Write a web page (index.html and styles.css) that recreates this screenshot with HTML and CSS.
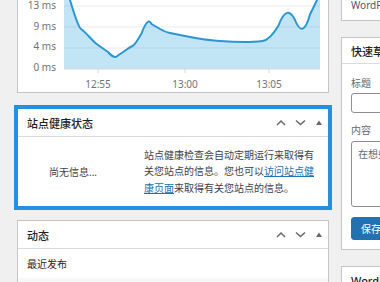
FILE: index.html
```html
<!DOCTYPE html>
<html lang="zh-CN">
<head>
<meta charset="utf-8">
<title>仪表盘</title>
<link rel="stylesheet" href="styles.css">
</head>
<body>
<div class="dash">
  <div class="col col-left">
    <div class="card chart-card">
      <svg class="chart" width="310" height="92" viewBox="18 0 310 92" xmlns="http://www.w3.org/2000/svg">
        <path class="area" d="M64,0 L70,0 Q78,27 81,29 Q84,31 89.5,37 Q95,43 98,45 Q101,47 108,52 Q115,60 118.5,55 Q122,53 126,50 Q130,47 132.5,46 Q135,45 141.5,33.5 Q148,16 151.5,24 Q155,26 160,29 Q165,32 170,33 Q175,34 182.5,35.5 Q190,37 198.5,38.5 Q207,40 220,41 Q233,42 244,42 Q255,42 262.5,41 Q270,40 278.5,25.5 Q287,3 295,20 Q303,40 310,14.5 L317,0 L320,0 L320,69 L64,69 Z"/>
        <line class="grid" x1="64" y1="6" x2="320" y2="6"/>
        <line class="grid" x1="64" y1="27" x2="320" y2="27"/>
        <line class="grid" x1="64" y1="48" x2="320" y2="48"/>
        <line class="axis" x1="64" y1="69" x2="320" y2="69"/>
        <line class="axis" x1="98" y1="69" x2="98" y2="73"/>
        <line class="axis" x1="185" y1="69" x2="185" y2="73"/>
        <line class="axis" x1="269" y1="69" x2="269" y2="73"/>
        <path class="line" d="M70,0 Q78,27 81,29 Q84,31 89.5,37 Q95,43 98,45 Q101,47 108,52 Q115,60 118.5,55 Q122,53 126,50 Q130,47 132.5,46 Q135,45 141.5,33.5 Q148,16 151.5,24 Q155,26 160,29 Q165,32 170,33 Q175,34 182.5,35.5 Q190,37 198.5,38.5 Q207,40 220,41 Q233,42 244,42 Q255,42 262.5,41 Q270,40 278.5,25.5 Q287,3 295,20 Q303,40 310,14.5 L317,0"/>
        <text class="lbl" x="56" y="9" text-anchor="end">13 ms</text>
        <text class="lbl" x="56" y="30" text-anchor="end">9 ms</text>
        <text class="lbl" x="56" y="50" text-anchor="end">4 ms</text>
        <text class="lbl" x="56" y="71" text-anchor="end">0 ms</text>
        <text class="lbl" x="98" y="88" text-anchor="middle">12:55</text>
        <text class="lbl" x="185" y="88" text-anchor="middle">13:00</text>
        <text class="lbl" x="269" y="88" text-anchor="middle">13:05</text>
      </svg>
    </div>

    <div class="card health">
      <div class="card-head">
        <h2>站点健康状态</h2>
        <div class="handles">
          <span class="h-btn h-up"><svg width="10" height="7" viewBox="0 0 10 7"><polyline points="1,6 5,2 9,6"/></svg></span>
          <span class="h-btn h-down"><svg width="11" height="7" viewBox="0 0 11 7"><polyline points="1,1.5 5.5,5.5 10,1.5"/></svg></span>
          <span class="h-btn h-tog"><svg width="6" height="5" viewBox="0 0 6 5"><polygon points="0,5 3,0.5 6,5"/></svg></span>
        </div>
      </div>
      <div class="health-body">
        <div class="health-status">尚无信息...</div>
        <div class="health-details">站点健康检查会自动定期运行来取得有关您站点的信息。您也可以<a href="#">访问站点健康页面</a>来取得有关您站点的信息。</div>
      </div>
    </div>

    <div class="card activity">
      <div class="card-head">
        <h2>动态</h2>
        <div class="handles">
          <span class="h-btn h-up"><svg width="10" height="7" viewBox="0 0 10 7"><polyline points="1,6 5,2 9,6"/></svg></span>
          <span class="h-btn h-down"><svg width="11" height="7" viewBox="0 0 11 7"><polyline points="1,1.5 5.5,5.5 10,1.5"/></svg></span>
          <span class="h-btn h-tog"><svg width="6" height="5" viewBox="0 0 6 5"><polygon points="0,5 3,0.5 6,5"/></svg></span>
        </div>
      </div>
      <div class="act-title">最近发布</div>
      <ul class="act-list">
        <li><span class="act-date">今天 下午1:07</span><a href="#">世界，您好！欢迎使用WordPress</a></li>
      </ul>
    </div>
  </div>

  <div class="col col-right">
    <div class="card news-top"><p>WordPress 5.4.2 安全和维护更新</p></div>

    <div class="card draft">
      <div class="card-head"><h2>快速草稿</h2></div>
      <form class="draft-body">
        <label class="fld-label" for="t">标题</label>
        <input class="fld-input" id="t" type="text">
        <label class="fld-label gap" for="c">内容</label>
        <textarea class="fld-area" id="c" placeholder="在想些什么？"></textarea>
        <button class="btn" type="button">保存草稿</button>
      </form>
    </div>

    <div class="card news">
      <div class="card-head"><h2>WordPress活动及新闻</h2></div>
    </div>
  </div>
</div>
</body>
</html>
```

FILE: styles.css
```css
* { box-sizing: border-box; }
html, body { margin: 0; padding: 0; }
body {
  width: 380px;
  height: 282px;
  overflow: hidden;
  background: #f0f0f1;
  font-family: "Noto Sans", "Noto Sans CJK SC", sans-serif;
  font-size: 10px;
  color: #3c434a;
}
.dash {
  display: flex;
  align-items: flex-start;
  gap: 12px;
  padding-left: 17px;
}
.col-left { width: 312px; flex: none; }
.col-right { width: 220px; flex: none; }

.card {
  background: #fff;
  border: 1px solid #c3c4c7;
}

/* chart */
.chart-card { height: 93px; border-top: none; }
.chart { display: block; }
.chart .area { fill: #c2e5f6; }
.chart .grid { stroke: rgba(0, 0, 0, 0.08); stroke-width: 1; }
.chart .axis { stroke: #d6d6d6; stroke-width: 1; }
.chart .line { fill: none; stroke: #2a96d2; stroke-width: 2; stroke-linejoin: round; stroke-linecap: round; }
.chart .lbl { font-family: "Noto Sans", sans-serif; font-size: 10px; fill: #6f7479; }

/* card header */
.card-head {
  display: flex;
  align-items: center;
  height: 28px;
  padding-left: 9px;
  border-bottom: 1px solid #dcdcde;
}
.card-head h2 {
  flex: 1;
  margin: 0;
  font-size: 11px;
  font-weight: 500;
  color: #1d2327;
  white-space: nowrap;
  font-family: "Noto Sans", "Noto Sans CJK SC", sans-serif;
}
.handles { display: flex; align-items: center; height: 100%; }
.h-btn { display: flex; align-items: center; justify-content: center; height: 100%; }
.h-up { width: 20px; }
.h-down { width: 19px; }
.h-tog { width: 18px; }
.h-btn svg { display: block; }
.h-btn polyline { fill: none; stroke: #646970; stroke-width: 1.5; }
.h-btn polygon { fill: #646970; }

/* health */
.health {
  margin-top: 15px;
  border-color: #2590e0;
  box-shadow: 0 0 0 3px #2590e0;
}
.health-body {
  display: flex;
  align-items: center;
  height: 69px;
}
.health-status {
  width: 110px;
  text-align: center;
  color: #3c434a;
}
.health-details {
  width: 171px;
  margin-left: 16px;
  line-height: 16.5px;
  color: #3c434a;
}
.health-details a { color: #2271b1; }

/* activity */
.activity { margin-top: 13px; }
.act-title {
  display: flex;
  align-items: center;
  height: 29px;
  padding: 0 9px;
  color: #1d2327;
}
.act-list {
  list-style: none;
  margin: 0;
  padding: 0;
  background: #f6f7f7;
}
.act-list li {
  display: flex;
  padding: 3px 9px;
  line-height: 14px;
}
.act-date { width: 154px; flex: none; color: #50575e; }
.act-list a { color: #2271b1; }

/* right column */
.news-top {
  height: 21px;
  border-top: none;
  padding: 0 9px;
}
.news-top p {
  margin: 0;
  line-height: 10px;
  color: #50575e;
  white-space: nowrap;
}
.draft { margin-top: 16px; }
.draft .card-head, .news .card-head { height: 26px; }
.draft-body {
  display: flex;
  flex-direction: column;
  align-items: flex-start;
  padding: 12px 9px 9px;
}
.fld-label {
  display: block;
  line-height: 14px;
  color: #646970;
}
.fld-label.gap { margin-top: 10px; }
.fld-input {
  display: block;
  width: 100%;
  height: 20px;
  margin-top: 3px;
  border: 1px solid #8c8f94;
  border-radius: 3px;
  background: #fff;
}
.fld-area {
  display: block;
  width: 100%;
  height: 66px;
  margin-top: 4px;
  padding: 5px 6px;
  border: 1px solid #8c8f94;
  border-radius: 3px;
  resize: none;
  font-family: "Noto Sans", "Noto Sans CJK SC", sans-serif;
  font-size: 10px;
  line-height: 14px;
  color: #2c3338;
}
.fld-area::placeholder { color: #646970; }
.btn {
  margin-top: 10px;
  height: 23px;
  padding: 0 9px;
  border: 1px solid #2271b1;
  border-radius: 3px;
  background: #2271b1;
  color: #fff;
  font-family: "Noto Sans", "Noto Sans CJK SC", sans-serif;
  font-size: 10px;
}
.news { margin-top: 16px; }
```
